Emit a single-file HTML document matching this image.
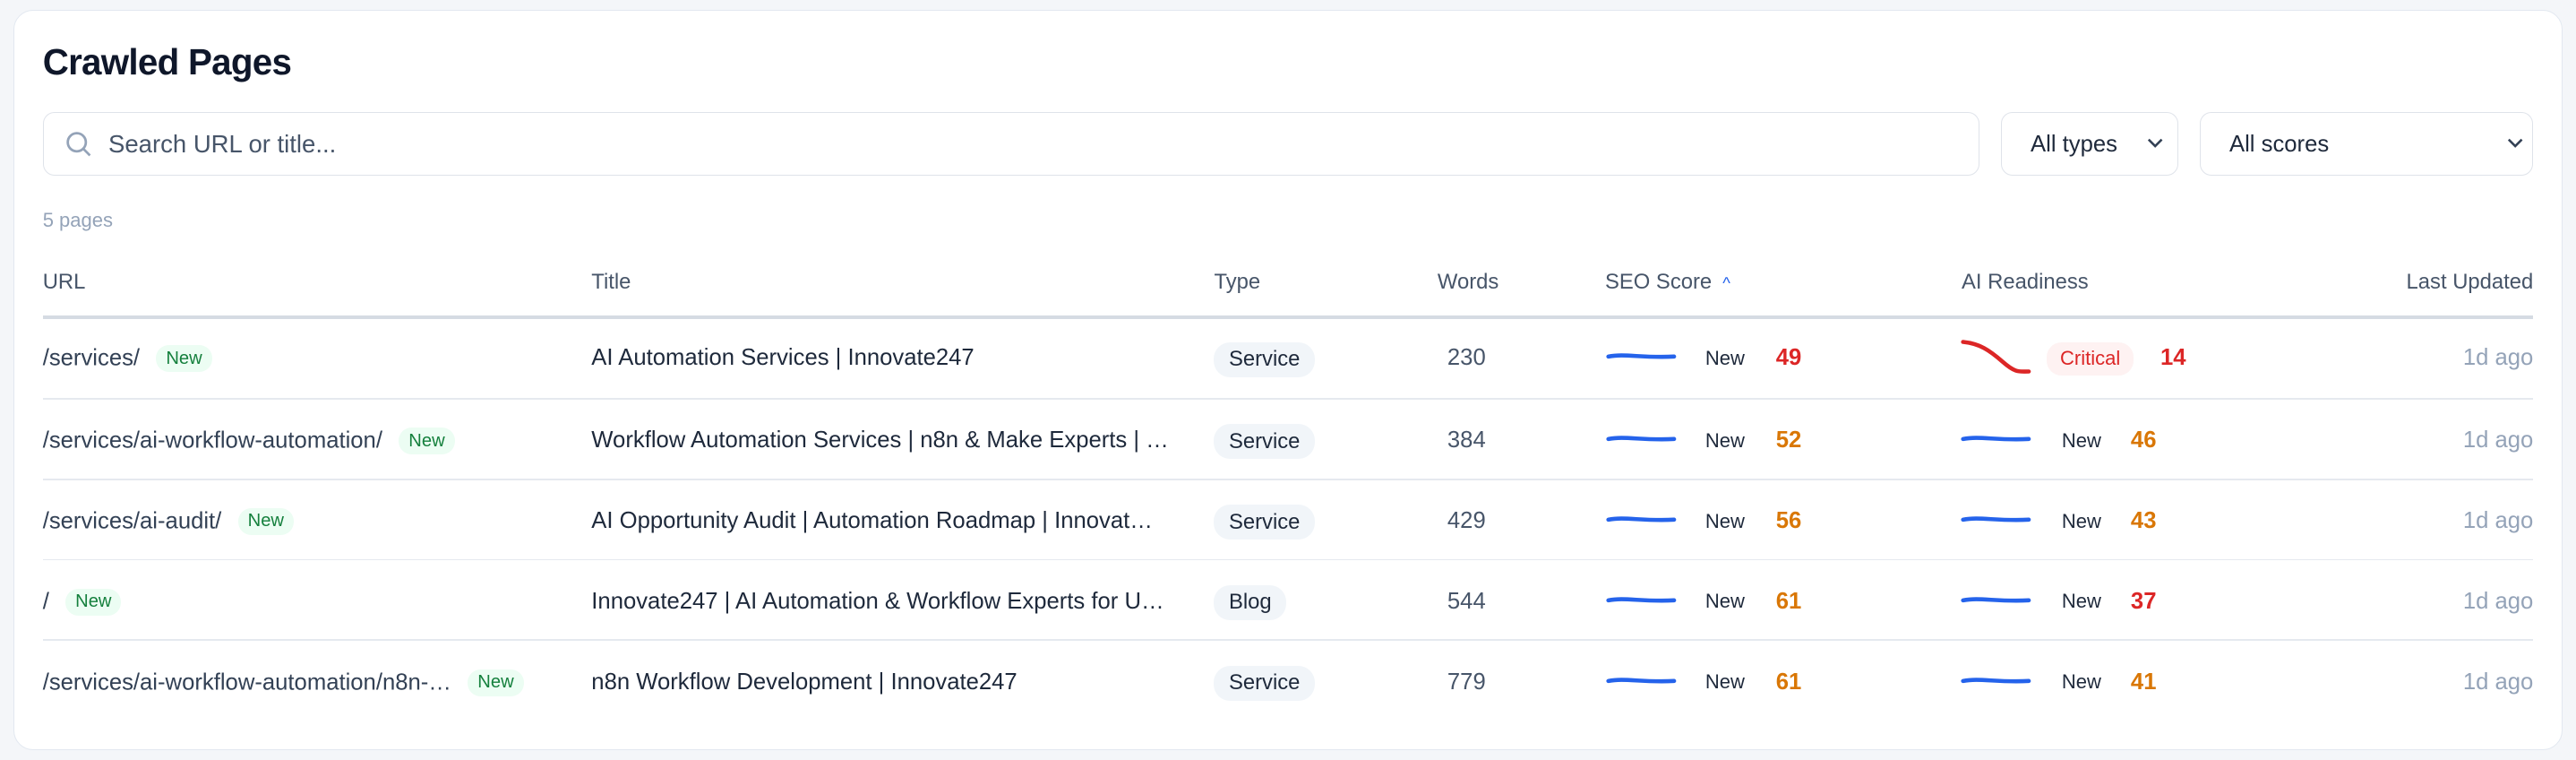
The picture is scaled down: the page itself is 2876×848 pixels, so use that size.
<!DOCTYPE html>
<html><head><meta charset="utf-8"><style>
html,body{margin:0;padding:0;background:#f4f6f9;width:2876px;height:848px;overflow:hidden}
#s{zoom:1.83418;position:relative;width:1568px;height:462px;font-family:"Liberation Sans",sans-serif;color:#1e293b}
.card{position:absolute;left:8px;top:6px;width:1551px;height:449px;background:#fff;border:1px solid #e2e8f0;border-radius:12px}
.a{position:absolute;white-space:nowrap}
h1{position:absolute;left:26px;top:25px;margin:0;font-size:22px;font-weight:bold;color:#0f172a;letter-spacing:-0.4px}
.box{position:absolute;border:1px solid #dfe3ea;border-radius:7px;background:#fff;box-sizing:border-box}
.hd{top:164px;font-size:13px;color:#475569}
.line{position:absolute;left:26px;width:1516px;height:1px;background:#e5e9ef}
.new{display:inline-block;background:#ecfdf3;color:#15803d;font-size:11px;padding:2px 6px;border-radius:8px;margin-left:10px;vertical-align:1px}
.pill{font-size:13px;background:#f1f5f9;border-radius:10px;padding:3px 9px;color:#1e293b}
.t{font-size:14px;color:#1e293b}
.n{font-size:14px;color:#475569}
.sm{font-size:12px;color:#1e293b}
.sc{font-size:14px;font-weight:bold}
.r{color:#dc2626}.o{color:#d97706}
.ago{font-size:14px;color:#94a3b8}
</style></head><body><div id="s">
<div class="card"></div>
<h1>Crawled Pages</h1>
<div class="box" style="left:26px;top:68px;width:1179px;height:39px"></div>
<svg class="a" style="left:39px;top:79px" width="17" height="17" viewBox="0 0 17 17" fill="none" stroke="#94a3b8" stroke-width="1.5"><circle cx="7.5" cy="7.5" r="5.5"/><path d="M11.5 11.5l4 4"/></svg>
<div class="a" style="left:66px;top:79px;font-size:15px;color:#475569">Search URL or title...</div>
<div class="box" style="left:1218px;top:68px;width:108px;height:39px"></div>
<div class="a" style="left:1236px;top:80px;font-size:14px">All types</div>
<svg class="a" style="left:1307px;top:83px" width="10" height="8"><path d="M1 2l4 4 4-4" stroke="#334155" stroke-width="1.4" fill="none"/></svg>
<div class="box" style="left:1339px;top:68px;width:203px;height:39px"></div>
<div class="a" style="left:1357px;top:80px;font-size:14px">All scores</div>
<svg class="a" style="left:1526px;top:83px" width="10" height="8"><path d="M1 2l4 4 4-4" stroke="#334155" stroke-width="1.4" fill="none"/></svg>
<div class="a" style="left:26px;top:127px;font-size:12px;color:#94a3b8">5 pages</div>
<div class="a hd" style="left:26px">URL</div>
<div class="a hd" style="left:360px">Title</div>
<div class="a hd" style="left:739px">Type</div>
<div class="a hd" style="left:875px">Words</div>
<div class="a hd" style="left:977px">SEO Score <span style="color:#2563eb;font-size:10px;margin-left:3px">^</span></div>
<div class="a hd" style="left:1194px">AI Readiness</div>
<div class="a hd" style="right:26px">Last Updated</div>
<div class="line" style="top:192px;height:2px;background:#d5dbe3"></div>
<div class="line" style="top:242px"></div>
<div class="line" style="top:291px"></div>
<div class="line" style="top:340px"></div>
<div class="line" style="top:389px"></div>

<div class="a t" style="left:26px;top:210px;color:#334155">/services/<span class="new">New</span></div>
<div class="a t" style="left:360px;top:210px">AI Automation Services | Innovate247</div>
<div class="a pill" style="left:739px;top:208px">Service</div>
<div class="a n" style="left:881px;top:210px">230</div>
<svg class="a" style="left:977px;top:210px" width="44" height="14"><path d="M2 7C12 5 22 8 42 7" stroke="#2563eb" stroke-width="2.5" fill="none" stroke-linecap="round"/></svg>
<div class="a sm" style="left:1038px;top:211px">New</div>
<div class="a sc r" style="left:1081px;top:210px">49</div>
<svg class="a" style="left:1193px;top:205px" width="44" height="24"><path d="M2 3C12 4 18 8 26 15S36 21 42 21" stroke="#dc2626" stroke-width="2.5" fill="none" stroke-linecap="round"/></svg>
<div class="a" style="left:1246px;top:208px;font-size:12px;color:#dc2626;background:#fef2f2;padding:3px 8px;border-radius:9px">Critical</div>
<div class="a sc r" style="left:1315px;top:210px">14</div>
<div class="a ago" style="right:26px;top:210px">1d ago</div>

<div class="a t" style="left:26px;top:260px;color:#334155">/services/ai-workflow-automation/<span class="new">New</span></div>
<div class="a t" style="left:360px;top:260px">Workflow Automation Services | n8n &amp; Make Experts | …</div>
<div class="a pill" style="left:739px;top:258px">Service</div>
<div class="a n" style="left:881px;top:260px">384</div>
<svg class="a" style="left:977px;top:260px" width="44" height="14"><path d="M2 7C12 5 22 8 42 7" stroke="#2563eb" stroke-width="2.5" fill="none" stroke-linecap="round"/></svg>
<div class="a sm" style="left:1038px;top:261px">New</div>
<div class="a sc o" style="left:1081px;top:260px">52</div>
<svg class="a" style="left:1193px;top:260px" width="44" height="14"><path d="M2 7C12 5 22 8 42 7" stroke="#2563eb" stroke-width="2.5" fill="none" stroke-linecap="round"/></svg>
<div class="a sm" style="left:1255px;top:261px">New</div>
<div class="a sc o" style="left:1297px;top:260px">46</div>
<div class="a ago" style="right:26px;top:260px">1d ago</div>

<div class="a t" style="left:26px;top:309px;color:#334155">/services/ai-audit/<span class="new">New</span></div>
<div class="a t" style="left:360px;top:309px">AI Opportunity Audit | Automation Roadmap | Innovat…</div>
<div class="a pill" style="left:739px;top:307px">Service</div>
<div class="a n" style="left:881px;top:309px">429</div>
<svg class="a" style="left:977px;top:309px" width="44" height="14"><path d="M2 7C12 5 22 8 42 7" stroke="#2563eb" stroke-width="2.5" fill="none" stroke-linecap="round"/></svg>
<div class="a sm" style="left:1038px;top:310px">New</div>
<div class="a sc o" style="left:1081px;top:309px">56</div>
<svg class="a" style="left:1193px;top:309px" width="44" height="14"><path d="M2 7C12 5 22 8 42 7" stroke="#2563eb" stroke-width="2.5" fill="none" stroke-linecap="round"/></svg>
<div class="a sm" style="left:1255px;top:310px">New</div>
<div class="a sc o" style="left:1297px;top:309px">43</div>
<div class="a ago" style="right:26px;top:309px">1d ago</div>

<div class="a t" style="left:26px;top:358px;color:#334155">/<span class="new">New</span></div>
<div class="a t" style="left:360px;top:358px">Innovate247 | AI Automation &amp; Workflow Experts for U…</div>
<div class="a pill" style="left:739px;top:356px">Blog</div>
<div class="a n" style="left:881px;top:358px">544</div>
<svg class="a" style="left:977px;top:358px" width="44" height="14"><path d="M2 7C12 5 22 8 42 7" stroke="#2563eb" stroke-width="2.5" fill="none" stroke-linecap="round"/></svg>
<div class="a sm" style="left:1038px;top:359px">New</div>
<div class="a sc o" style="left:1081px;top:358px">61</div>
<svg class="a" style="left:1193px;top:358px" width="44" height="14"><path d="M2 7C12 5 22 8 42 7" stroke="#2563eb" stroke-width="2.5" fill="none" stroke-linecap="round"/></svg>
<div class="a sm" style="left:1255px;top:359px">New</div>
<div class="a sc r" style="left:1297px;top:358px">37</div>
<div class="a ago" style="right:26px;top:358px">1d ago</div>

<div class="a t" style="left:26px;top:407px;color:#334155">/services/ai-workflow-automation/n8n-…<span class="new">New</span></div>
<div class="a t" style="left:360px;top:407px">n8n Workflow Development | Innovate247</div>
<div class="a pill" style="left:739px;top:405px">Service</div>
<div class="a n" style="left:881px;top:407px">779</div>
<svg class="a" style="left:977px;top:407px" width="44" height="14"><path d="M2 7C12 5 22 8 42 7" stroke="#2563eb" stroke-width="2.5" fill="none" stroke-linecap="round"/></svg>
<div class="a sm" style="left:1038px;top:408px">New</div>
<div class="a sc o" style="left:1081px;top:407px">61</div>
<svg class="a" style="left:1193px;top:407px" width="44" height="14"><path d="M2 7C12 5 22 8 42 7" stroke="#2563eb" stroke-width="2.5" fill="none" stroke-linecap="round"/></svg>
<div class="a sm" style="left:1255px;top:408px">New</div>
<div class="a sc o" style="left:1297px;top:407px">41</div>
<div class="a ago" style="right:26px;top:407px">1d ago</div>
</div></body></html>
